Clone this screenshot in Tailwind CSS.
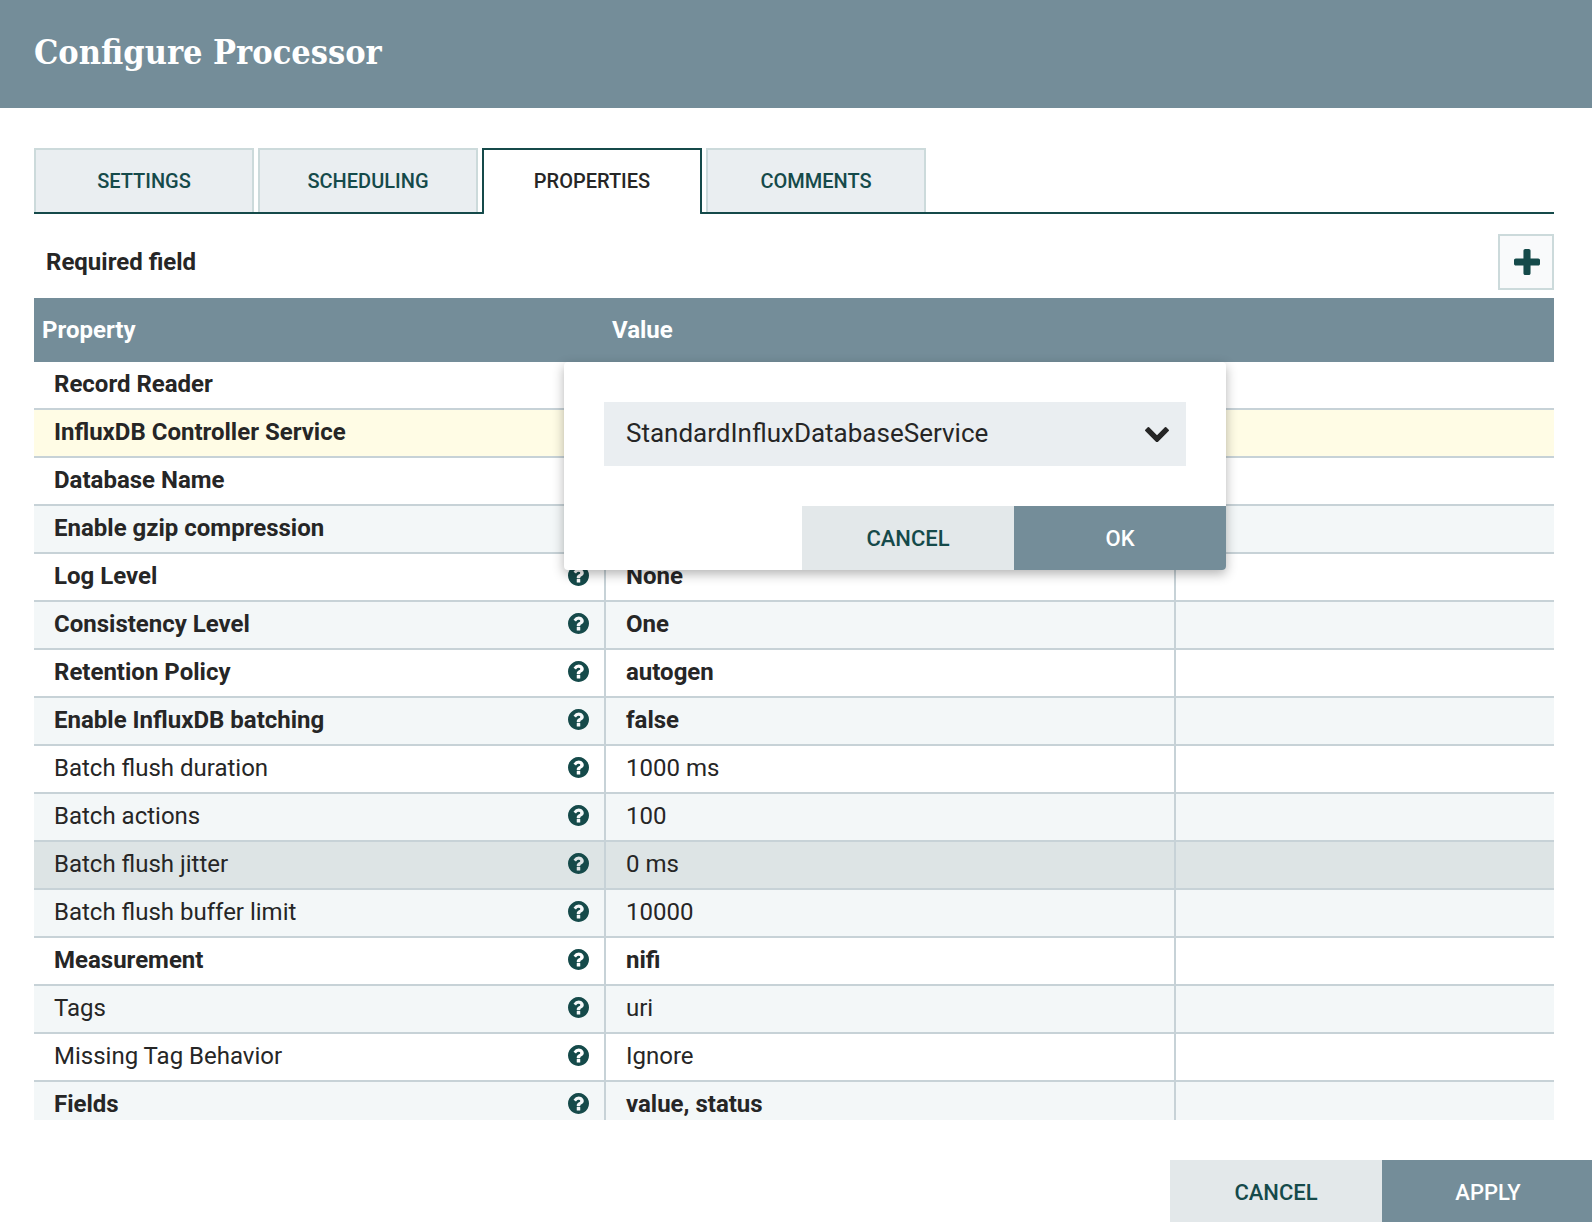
<!DOCTYPE html>
<html lang="en">
<head>
  <meta charset="UTF-8">
  <meta name="viewport" content="width=device-width, initial-scale=1.0">
  <title>Configure Processor</title>
  <script src="https://cdn.jsdelivr.net/npm/@tailwindcss/browser@4"></script>
</head>
<body class="flex h-screen flex-col overflow-hidden bg-white font-[Roboto,sans-serif] text-2xl text-[#262626]">

  <!-- Dialog Header -->
  <header class="flex h-[108px] shrink-0 items-center bg-[#748d99] pb-[2px] pl-[34px]">
    <h1 class="font-['Roboto_Slab','DejaVu_Serif_Condensed','DejaVu_Serif',serif] text-[34px] font-bold text-white">Configure Processor</h1>
  </header>

  <main class="flex min-h-0 flex-1 flex-col pt-10 pr-[38px] pb-10 pl-[34px]">

    <!-- Tabs -->
    <div role="tablist" class="flex h-[66px] shrink-0 gap-1 border-b-2 border-[#154a4a] text-xl font-medium text-[#154a4a]">
      <button type="button" role="tab" class="w-[220px] border-2 border-b-0 border-[#ccdadb] bg-[#eaeef1]">SETTINGS</button>
      <button type="button" role="tab" class="w-[220px] border-2 border-b-0 border-[#ccdadb] bg-[#eaeef1]">SCHEDULING</button>
      <button type="button" role="tab" aria-selected="true" class="-mb-[2px] w-[220px] rounded-b-xs border-2 border-b-0 border-[#154a4a] bg-white pb-[2px] text-[#262626]">PROPERTIES</button>
      <button type="button" role="tab" class="w-[220px] border-2 border-b-0 border-[#ccdadb] bg-[#eaeef1]">COMMENTS</button>
    </div>

    <div class="mt-5 mb-2 flex shrink-0 items-center justify-between pl-3">
      <span class="font-bold">Required field</span>
      <button type="button" aria-label="New property" class="flex size-14 items-center justify-center border-2 border-[#ccdadb] bg-[#f9fafb] pl-[2px]">
        <svg class="size-[26px] fill-[#154a4a]" viewBox="192 128 1408 1408"><path d="M1600 736v192q0 40-28 68t-68 28h-416v416q0 40-28 68t-68 28h-192q-40 0-68-28t-28-68v-416h-416q-40 0-68-28t-28-68v-192q0-40 28-68t68-28h416v-416q0-40 28-68t68-28h192q40 0 68 28t28 68v416h416q40 0 68 28t28 68z"/></svg>
      </button>
    </div>

    <!-- Properties -->
    <div class="relative min-h-0 flex-1">
      <div class="h-full overflow-hidden">
        <table class="w-full table-fixed border-separate border-spacing-0 text-left">
          <colgroup>
            <col class="w-[570px]">
            <col class="w-[570px]">
            <col>
          </colgroup>
          <thead>
            <tr class="h-16 bg-[#748d99] text-white">
              <th class="px-2 font-bold">Property</th>
              <th class="px-2 font-bold">Value</th>
              <th></th>
            </tr>
          </thead>
          <tbody id="properties"></tbody>
        </table>
      </div>

      <!-- Value editor -->
      <form class="absolute top-16 left-[530px] w-[662px] overflow-hidden rounded-sm bg-white shadow-[0_4px_12px_rgba(0,0,0,0.3)]">
        <div class="relative m-10">
          <select aria-label="InfluxDB Controller Service" class="h-16 w-full appearance-none bg-[#eaeef1] px-[22px] pb-[2px] text-[26px]">
            <option>StandardInfluxDatabaseService</option>
          </select>
          <svg class="pointer-events-none absolute top-[25px] right-[17px] w-6 fill-[#262626]" viewBox="90 533 1612 1035"><path d="M1683 808l-742 741q-19 19-45 19t-45-19l-742-741q-19-19-19-45.500t19-45.500l166-165q19-19 45-19t45 19l531 531 531-531q19-19 45-19t45 19l166 165q19 19 19 45.500t-19 45.500z"/></svg>
        </div>
        <div class="flex justify-end text-[22px] font-medium">
          <button type="button" class="h-16 w-[212px] bg-[#e3e8ea] pt-[2px] text-[#154a4a]">CANCEL</button>
          <button type="button" class="h-16 w-[212px] bg-[#748d99] pt-[2px] text-white">OK</button>
        </div>
      </form>
    </div>
  </main>

  <!-- Dialog Buttons -->
  <footer class="flex shrink-0 justify-end text-[22px] font-medium">
    <button type="button" class="h-[62px] w-[212px] bg-[#e3e8ea] pt-1 text-[#154a4a]">CANCEL</button>
    <button type="button" class="h-[62px] w-[210px] bg-[#748d99] pt-1 pl-[2px] text-white">APPLY</button>
  </footer>

  <script>
    const properties = [
      { name: "Record Reader", value: "", required: true },
      { name: "InfluxDB Controller Service", value: "", required: true, editing: true },
      { name: "Database Name", value: "", required: true },
      { name: "Enable gzip compression", value: "", required: true },
      { name: "Log Level", value: "None", required: true },
      { name: "Consistency Level", value: "One", required: true },
      { name: "Retention Policy", value: "autogen", required: true },
      { name: "Enable InfluxDB batching", value: "false", required: true },
      { name: "Batch flush duration", value: "1000 ms" },
      { name: "Batch actions", value: "100" },
      { name: "Batch flush jitter", value: "0 ms", hovered: true },
      { name: "Batch flush buffer limit", value: "10000" },
      { name: "Measurement", value: "nifi", required: true },
      { name: "Tags", value: "uri" },
      { name: "Missing Tag Behavior", value: "Ignore" },
      { name: "Fields", value: "value, status", required: true },
    ];

    const helpIcon = `<svg class="mb-[2px] size-[21px] fill-[#154a4a]" viewBox="128 128 1536 1536"><path d="M1024 1376v-192q0-14-9-23t-23-9h-192q-14 0-23 9t-9 23v192q0 14 9 23t23 9h192q14 0 23-9t9-23zm256-672q0-88-55.500-163t-138.500-116-170-41q-243 0-371 213-15 24 8 42l132 100q7 6 19 6 16 0 25-12 53-68 86-92 34-24 86-24 48 0 85.500 26t37.500 59q0 38-20 61t-68 45q-63 28-115.500 86.500t-52.500 125.500v36q0 14 9 23t23 9h192q14 0 23-9t9-23q0-19 21.500-49.500t54.500-49.500q32-18 49-28.500t46-35 44.500-48 28-60.500 12.500-81zm384 192q0 209-103 385.500t-279.500 279.500-385.500 103-385.500-103-279.500-279.500-103-385.500 103-385.500 279.500-279.500 385.500-103 385.500 103 279.500 279.500 103 385.500z"/></svg>`;

    // Row background depends on state first, then on striping
    function rowColor(property, index) {
      if (property.editing) return "bg-[#fffce5]";
      if (property.hovered) return "bg-[#dde4e5]";
      return index % 2 ? "bg-[#f3f7f8]" : "bg-white";
    }

    document.getElementById("properties").innerHTML = properties.map((property, index) => `
      <tr class="h-12 ${rowColor(property, index)} ${property.required ? "font-bold" : "font-normal"}">
        <td class="border-b-2 border-[#c7d2d7] pr-[15px] pb-[2px] pl-5">
          <div class="flex items-center justify-between">
            <span>${property.name}</span>
            ${helpIcon}
          </div>
        </td>
        <td class="border-b-2 border-l-2 border-[#c7d2d7] px-5 pb-[2px]">${property.value}</td>
        <td class="border-b-2 border-l-2 border-[#c7d2d7]"></td>
      </tr>`).join("");
  </script>
</body>
</html>
